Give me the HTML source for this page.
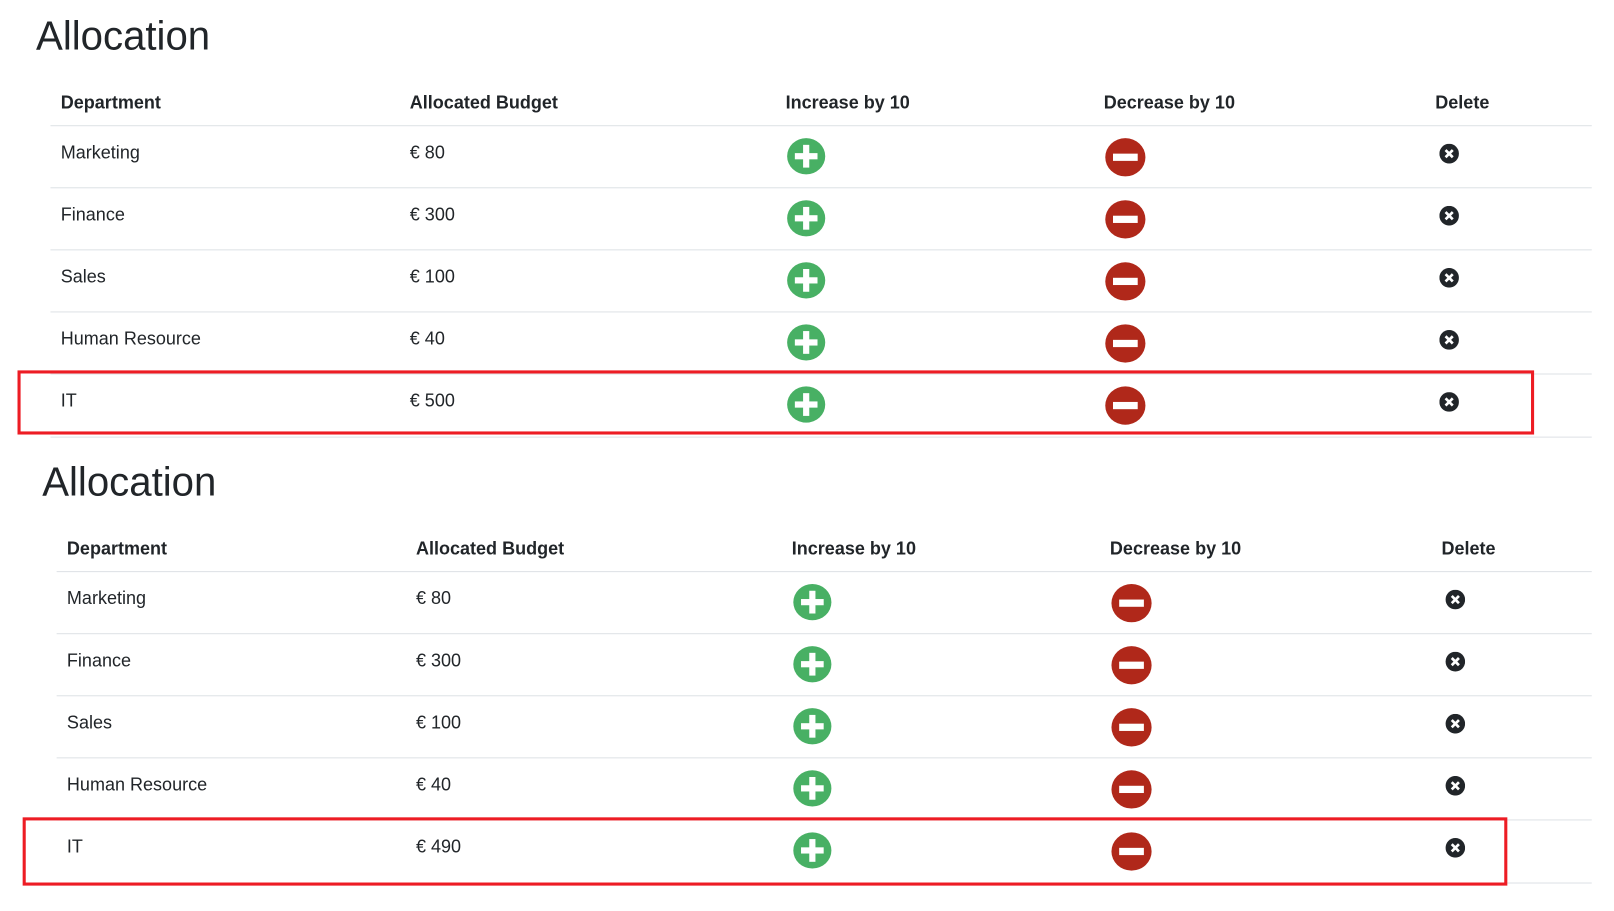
<!DOCTYPE html>
<html><head><meta charset="utf-8"><style>
html,body{margin:0;padding:0;background:#fff;width:1614px;height:911px;overflow:hidden}
#w{position:absolute;left:0;top:0;width:1560px;height:880px;transform:scale(1.0296,1.0346);transform-origin:0 0;font-family:"Liberation Sans",sans-serif;color:#212529}
.t{position:absolute;font-size:39px;line-height:1}
.h,.c{position:absolute;font-size:17.5px;line-height:1;white-space:nowrap}
.h{font-weight:bold}
.l{position:absolute;height:1px;background:#dee2e6}
.r{position:absolute;border:3px solid #ed1c24;box-sizing:border-box}
svg{position:absolute}
</style></head><body><div id="w"></div>
<script>
var w=document.getElementById('w'),h='';
function tbl(dx,dy,vals,box){
 h+='<div class="t" style="left:'+(35+dx)+'px;top:'+(16+dy)+'px">Allocation</div>';
 var hx=[59,398,763,1072,1394],hn=['Department','Allocated Budget','Increase by 10','Decrease by 10','Delete'];
 for(var i=0;i<5;i++)h+='<div class="h" style="left:'+(hx[i]+dx)+'px;top:'+(91+dy)+'px">'+hn[i]+'</div>';
 var d=['Marketing','Finance','Sales','Human Resource','IT'];
 for(var r=0;r<5;r++){
  var y=dy+r*60.1;
  h+='<div class="l" style="left:'+(49+dx)+'px;width:'+(1497-dx)+'px;top:'+(121+y)+'px"></div>';
  h+='<div class="c" style="left:'+(59+dx)+'px;top:'+(138.5+y)+'px">'+d[r]+'</div>';
  h+='<div class="c" style="left:'+(398+dx)+'px;top:'+(138.5+y)+'px">€ '+vals[r]+'</div>';
  h+='<svg width="38" height="36" style="left:'+(764+dx)+'px;top:'+(133+y)+'px" viewBox="0 0 38 36"><ellipse cx="19" cy="18" rx="18.5" ry="17.5" fill="#48b064"/><rect x="16" y="7" width="6" height="22" fill="#fff"/><rect x="8" y="15" width="22" height="6" fill="#fff"/></svg>';
  h+='<svg width="40" height="38" style="left:'+(1073+dx)+'px;top:'+(133+y)+'px" viewBox="0 0 40 38"><ellipse cx="20" cy="19" rx="19.5" ry="18.5" fill="#b0281a"/><rect x="8" y="15.5" width="24" height="7" fill="#fff"/></svg>';
  h+='<svg width="19" height="19" style="left:'+(1398+dx)+'px;top:'+(139+y)+'px" viewBox="0 0 19 19"><circle cx="9.5" cy="9.5" r="9.5" fill="#212529"/><path d="M6 6L13 13M13 6L6 13" stroke="#fff" stroke-width="2.6"/></svg>';
 }
 h+='<div class="l" style="left:'+(49+dx)+'px;width:'+(1497-dx)+'px;top:'+(121+dy+5*60.1)+'px"></div>';
 h+='<div class="r" style="left:'+box[0]+'px;top:'+box[1]+'px;width:'+(box[2]-box[0])+'px;height:'+(box[3]-box[1])+'px"></div>';
}
tbl(0,0,[80,300,100,40,500],[17,358,1490,420]);
tbl(6,431,[80,300,100,40,490],[22,790,1464,856]);
w.innerHTML=h;
</script>
</body></html>
